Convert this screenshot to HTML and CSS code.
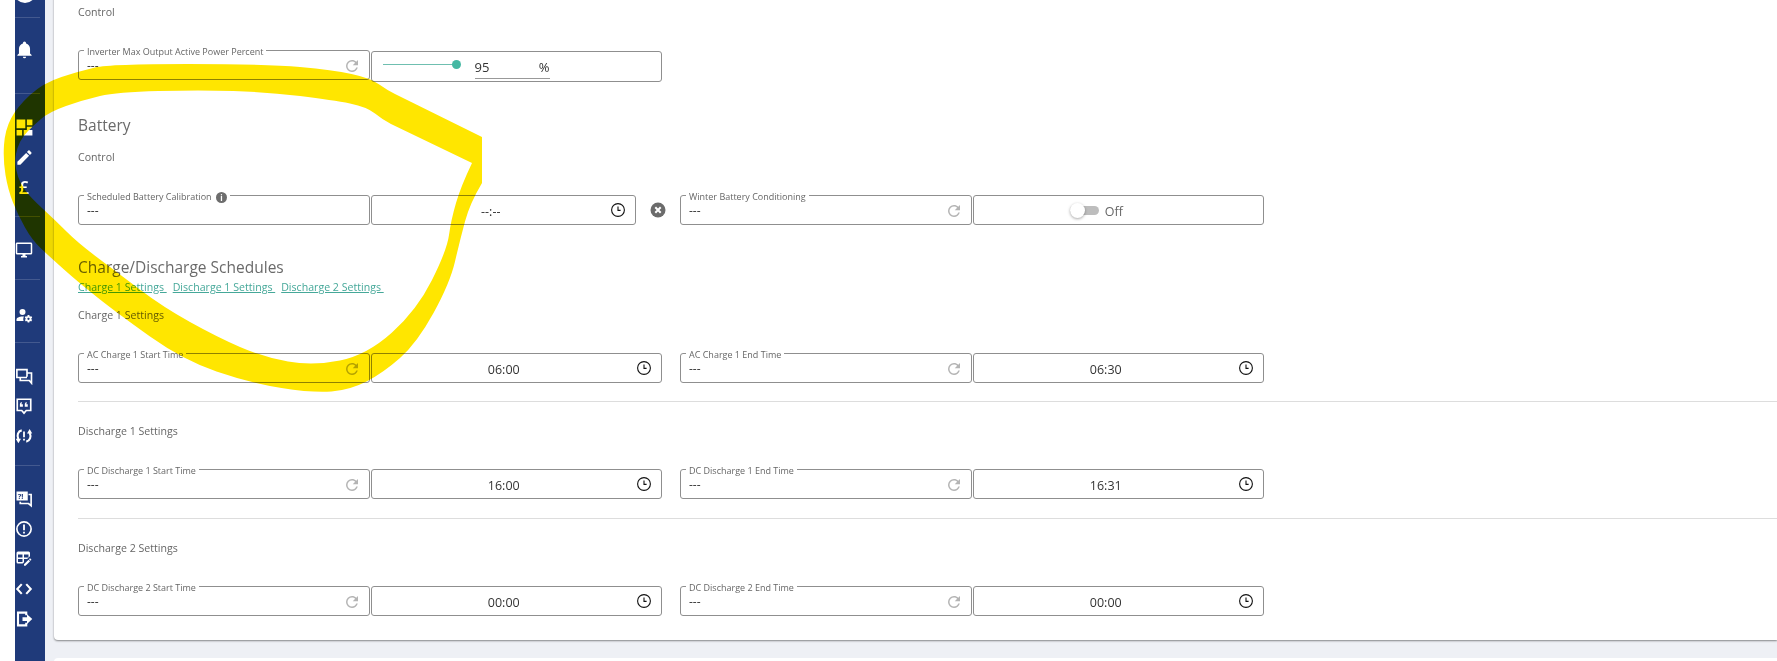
FILE: index.html
```html
<!DOCTYPE html>
<html lang="en">
<head>
    <meta charset="UTF-8">
    <title>Inverter Settings</title>
    <link rel="stylesheet" href="styles.css">
</head>
<body>
    <svg class="sprite" aria-hidden="true">
        <symbol id="i-refresh" viewBox="0 0 24 24"><path d="M17.65,6.35C16.2,4.9 14.21,4 12,4A8,8 0 0,0 4,12A8,8 0 0,0 12,20C15.73,20 18.84,17.45 19.73,14H17.65C16.83,16.33 14.61,18 12,18A6,6 0 0,1 6,12A6,6 0 0,1 12,6C13.66,6 15.14,6.69 16.22,7.78L13,11H20V4L17.65,6.35Z"/></symbol>
        <symbol id="i-clock" viewBox="0 0 16 16"><circle cx="8" cy="8" r="6.4" fill="none" stroke="currentColor" stroke-width="1.1"/><path d="M8 4.6V8.4H10.6" fill="none" stroke="currentColor" stroke-width="1.1"/></symbol>
    </svg>

    <div class="page">
        <!-- サイドバー -->
        <nav class="sidebar">
            <div class="logo"></div>
            <div class="nav-group nav-group-alerts">
                <div class="nav-item"><svg viewBox="0 0 24 24"><path d="M21,19V20H3V19L5,17V11C5,7.9 7.03,5.17 10,4.29C10,4.19 10,4.1 10,4A2,2 0 0,1 12,2A2,2 0 0,1 14,4C14,4.1 14,4.19 14,4.29C16.97,5.17 19,7.9 19,11V17L21,19M14,21A2,2 0 0,1 12,23A2,2 0 0,1 10,21"/></svg></div>
            </div>
            <div class="nav-group">
                <div class="nav-item"><svg viewBox="0 0 24 24"><path d="M2 2H13V13H2ZM15 2H22V9H15ZM2 15H9V22H2ZM11 15H22V22H11Z M15 11H22L15 18Z"/></svg></div>
                <div class="nav-item"><svg viewBox="0 0 24 24"><path d="M20.71,7.04C21.1,6.65 21.1,6 20.71,5.63L18.37,3.29C18,2.9 17.35,2.9 16.96,3.29L15.12,5.12L18.87,8.87M3,17.25V21H6.75L17.81,9.93L14.06,6.18L3,17.25Z"/></svg></div>
                <div class="nav-item nav-pound">£</div>
            </div>
            <div class="nav-group">
                <div class="nav-item"><svg class="icon-lg" viewBox="0 0 24 24"><path d="M21,16H3V4H21M21,2H3C1.89,2 1,2.89 1,4V16A2,2 0 0,0 3,18H10V20H8V22H16V20H14V18H21A2,2 0 0,0 23,16V4C23,2.89 22.1,2 21,2Z"/></svg></div>
            </div>
            <div class="nav-group nav-group-admin">
                <div class="nav-item"><svg class="icon-lg" viewBox="0 0 24 24"><path d="M10 4A4 4 0 0 0 6 8A4 4 0 0 0 10 12A4 4 0 0 0 14 8A4 4 0 0 0 10 4M10 14C5.58 14 2 15.79 2 18V20H11.5A6.5 6.5 0 0 1 11 17.5A6.5 6.5 0 0 1 11.95 14.14C11.32 14.06 10.68 14 10 14M17 12C16.87 12 16.76 12.09 16.74 12.21L16.55 13.53C16.25 13.66 15.96 13.82 15.7 14L14.46 13.5C14.35 13.5 14.22 13.5 14.15 13.63L13.15 15.36C13.09 15.47 13.11 15.6 13.21 15.68L14.27 16.5C14.25 16.67 14.24 16.83 14.24 17C14.24 17.17 14.25 17.33 14.27 17.5L13.21 18.32C13.12 18.4 13.09 18.53 13.15 18.64L14.15 20.37C14.21 20.5 14.34 20.5 14.46 20.5L15.7 20C15.96 20.18 16.24 20.35 16.55 20.47L16.74 21.79C16.76 21.91 16.86 22 17 22H19C19.11 22 19.22 21.91 19.24 21.79L19.43 20.47C19.73 20.34 20 20.18 20.27 20L21.5 20.5C21.63 20.5 21.76 20.5 21.83 20.37L22.83 18.64C22.89 18.53 22.86 18.4 22.77 18.32L21.7 17.5C21.72 17.33 21.74 17.17 21.74 17C21.74 16.83 21.73 16.67 21.7 16.5L22.76 15.68C22.85 15.6 22.88 15.47 22.82 15.36L21.82 13.63C21.76 13.5 21.63 13.5 21.5 13.5L20.27 14C20 13.82 19.73 13.65 19.42 13.53L19.23 12.21C19.22 12.09 19.11 12 19 12H17M18 15.5C18.83 15.5 19.5 16.17 19.5 17C19.5 17.83 18.83 18.5 18 18.5C17.16 18.5 16.5 17.83 16.5 17C16.5 16.17 17.17 15.5 18 15.5Z"/></svg></div>
            </div>
            <div class="nav-group">
                <div class="nav-item"><svg class="icon-lg" viewBox="0 0 24 24"><path class="line" d="M16 13V3.5H2.5V14H16M7 14V18H19L22 21.5V8H16"/></svg></div>
                <div class="nav-item"><svg class="icon-lg" viewBox="0 0 24 24"><path class="line" d="M3 3H21V18H15L12 21.5L9 18H3Z"/><path d="M6.5 13V10C6.5 8 7.5 7 9 6.5V8.5C8.7 8.7 8.5 9 8.5 9.5H10.5V13ZM13 13V10C13 8 14 7 15.5 6.5V8.5C15.2 8.7 15 9 15 9.5H17V13Z"/></svg></div>
                <div class="nav-item"><svg class="icon-lg" viewBox="0 0 24 24"><path class="line line-bold" d="M9 4.5C4 5.5 2 11 4.5 16.5M15 19.5C20 18.5 22 13 19.5 7.5"/><path d="M1 15.5L8 15.5L4.5 21.5ZM23 8.5L16 8.5L19.5 2.5ZM10.8 6H13.2V13.5H10.8ZM10.8 15.5H13.2V18H10.8Z"/></svg></div>
            </div>
            <div class="nav-group">
                <div class="nav-item"><svg class="icon-lg" viewBox="0 0 24 24"><path d="M2 2H17V14H2Z"/><path class="line" d="M18 6H21.5V21L18 18H7V15.5"/><text class="icon-text" x="3.6" y="11.5">?!</text></svg></div>
                <div class="nav-item"><svg class="icon-lg" viewBox="0 0 24 24"><circle class="line" cx="12" cy="12" r="9.5"/><path d="M10.8 6H13.2V13.5H10.8ZM10.8 15.5H13.2V18H10.8Z"/></svg></div>
                <div class="nav-item"><svg class="icon-lg" viewBox="0 0 24 24"><path d="M21.7,13.35L20.7,14.35L18.65,12.3L19.65,11.3C19.86,11.08 20.21,11.08 20.42,11.3L21.7,12.58C21.92,12.79 21.92,13.14 21.7,13.35M12,18.94L18.07,12.88L20.12,14.93L14.06,21H12V18.94M4,2H18A2,2 0 0,1 20,4V8.17L16.17,12H12V16.17L10.17,18H4A2,2 0 0,1 2,16V4A2,2 0 0,1 4,2M4,6V10H10V6H4M12,6V10H18V6H12M4,12V16H10V12H4Z"/></svg></div>
                <div class="nav-item"><svg class="icon-lg" viewBox="0 0 24 24"><path class="line line-bold" d="M9 5.5L3 12L9 18.5M15 5.5L21 12L15 18.5"/></svg></div>
                <div class="nav-item"><svg class="icon-lg" viewBox="0 0 24 24"><path class="line line-bold" d="M15 7V3.5H4V20.5H15V17"/><path d="M10 9.5H16V5.5L23 12L16 18.5V14.5H10Z"/></svg></div>
            </div>
        </nav>

        <main class="content">
            <div class="card">
                <section class="block">
                    <h4 class="subhead">Control</h4>
                    <div class="row">
                        <div class="pair">
                            <div class="field field-read">
                                <span class="field-label">Inverter Max Output Active Power Percent</span>
                                <span class="field-value">---</span>
                                <svg class="icon-refresh"><use href="#i-refresh"/></svg>
                            </div>
                            <div class="field field-slider">
                                <div class="slider"><span class="slider-thumb"></span></div>
                                <div class="percent-input"><span>95</span><span>%</span></div>
                            </div>
                        </div>
                    </div>
                </section>

                <section class="block">
                    <h3 class="heading">Battery</h3>
                    <h4 class="subhead subhead-tight">Control</h4>
                    <div class="row row-battery">
                        <div class="pair pair-short">
                            <div class="field field-read">
                                <span class="field-label">Scheduled Battery Calibration <span class="info-dot">i</span></span>
                                <span class="field-value">---</span>
                            </div>
                            <div class="field field-time">
                                <span class="time-value">--:--</span>
                                <svg class="icon-clock"><use href="#i-clock"/></svg>
                            </div>
                        </div>
                        <div class="clear-cell">
                            <svg class="icon-clear" viewBox="0 0 16 16"><circle cx="8" cy="8" r="7.5"/><path d="M5.3 5.3L10.7 10.7M10.7 5.3L5.3 10.7"/></svg>
                        </div>
                        <div class="pair">
                            <div class="field field-read">
                                <span class="field-label">Winter Battery Conditioning</span>
                                <span class="field-value">---</span>
                                <svg class="icon-refresh"><use href="#i-refresh"/></svg>
                            </div>
                            <div class="field field-toggle">
                                <span class="toggle"><span class="toggle-knob"></span></span>
                                <span class="toggle-text">Off</span>
                            </div>
                        </div>
                    </div>
                </section>

                <section class="block">
                    <h3 class="heading heading-schedules">Charge/Discharge Schedules</h3>
                    <div class="links">
                        <a href="#charge1">Charge 1 Settings&nbsp;</a>
                        <a href="#discharge1">Discharge 1 Settings&nbsp;</a>
                        <a href="#discharge2">Discharge 2 Settings&nbsp;</a>
                    </div>
                    <h4 class="subhead subhead-tight" id="charge1">Charge 1 Settings</h4>
                    <div class="row">
                        <div class="pair">
                            <div class="field field-read">
                                <span class="field-label">AC Charge 1 Start Time</span>
                                <span class="field-value">---</span>
                                <svg class="icon-refresh"><use href="#i-refresh"/></svg>
                            </div>
                            <div class="field field-time">
                                <span class="time-value">06:00</span>
                                <svg class="icon-clock"><use href="#i-clock"/></svg>
                            </div>
                        </div>
                        <div class="pair">
                            <div class="field field-read">
                                <span class="field-label">AC Charge 1 End Time</span>
                                <span class="field-value">---</span>
                                <svg class="icon-refresh"><use href="#i-refresh"/></svg>
                            </div>
                            <div class="field field-time">
                                <span class="time-value">06:30</span>
                                <svg class="icon-clock"><use href="#i-clock"/></svg>
                            </div>
                        </div>
                    </div>
                </section>

                <section class="block block-divided">
                    <h4 class="subhead" id="discharge1">Discharge 1 Settings</h4>
                    <div class="row">
                        <div class="pair">
                            <div class="field field-read">
                                <span class="field-label">DC Discharge 1 Start Time</span>
                                <span class="field-value">---</span>
                                <svg class="icon-refresh"><use href="#i-refresh"/></svg>
                            </div>
                            <div class="field field-time">
                                <span class="time-value">16:00</span>
                                <svg class="icon-clock"><use href="#i-clock"/></svg>
                            </div>
                        </div>
                        <div class="pair">
                            <div class="field field-read">
                                <span class="field-label">DC Discharge 1 End Time</span>
                                <span class="field-value">---</span>
                                <svg class="icon-refresh"><use href="#i-refresh"/></svg>
                            </div>
                            <div class="field field-time">
                                <span class="time-value">16:31</span>
                                <svg class="icon-clock"><use href="#i-clock"/></svg>
                            </div>
                        </div>
                    </div>
                </section>

                <section class="block block-divided block-last">
                    <h4 class="subhead" id="discharge2">Discharge 2 Settings</h4>
                    <div class="row">
                        <div class="pair">
                            <div class="field field-read">
                                <span class="field-label">DC Discharge 2 Start Time</span>
                                <span class="field-value">---</span>
                                <svg class="icon-refresh"><use href="#i-refresh"/></svg>
                            </div>
                            <div class="field field-time">
                                <span class="time-value">00:00</span>
                                <svg class="icon-clock"><use href="#i-clock"/></svg>
                            </div>
                        </div>
                        <div class="pair">
                            <div class="field field-read">
                                <span class="field-label">DC Discharge 2 End Time</span>
                                <span class="field-value">---</span>
                                <svg class="icon-refresh"><use href="#i-refresh"/></svg>
                            </div>
                            <div class="field field-time">
                                <span class="time-value">00:00</span>
                                <svg class="icon-clock"><use href="#i-clock"/></svg>
                            </div>
                        </div>
                    </div>
                </section>
            </div>
            <div class="card card-next"></div>
        </main>

        <!-- 黄色のマーカー -->
        <svg class="marker" viewBox="0 0 1777 661" aria-hidden="true">
            <path fill-rule="evenodd" d="M482 137L395 94Q387 90 378.5 84Q370 78 351.5 74Q333 70 300 67Q267 64 188 64Q110 64 95 67.5Q80 71 61.5 77Q43 83 30 95Q17 107 11 118.5Q5 130 4 145Q3 160 5.5 175Q8 190 13 202.5Q18 215 25 227.5Q32 240 41 248.5Q50 257 64 269.5Q78 282 97.5 297.5Q117 313 150 336.5Q183 360 216.5 371.5Q250 383 281.5 388Q313 393 331.5 391.5Q350 390 366.5 381.5Q383 373 400 358Q417 343 433.5 313Q450 283 455 261.5Q460 240 465 221.5Q470 203 482 183Z M472 163L391 124Q383 120 375 113.5Q367 107 350 103.5Q333 100 300 96Q267 92 233.5 91Q200 90 158.5 91Q117 92 100 96Q83 100 66 106Q49 112 41 119Q33 126 28 131Q23 136 20 142Q17 148 16 154Q15 160 15.5 165Q16 170 18 176.5Q20 183 25 190Q30 197 42.5 208.5Q55 220 66.5 231.5Q78 243 98 258Q118 273 140.5 290Q163 307 190 322Q217 337 240 347Q263 357 288 361.5Q313 366 340 360.5Q367 355 392 332.5Q417 310 432 280Q447 250 449 235Q451 220 456 203Q461 186 472 163Z"/>
        </svg>
    </div>
</body>
</html>
```

FILE: styles.css
```css
/* 全体 */
* {
    box-sizing: border-box;
}

body {
    margin: 0;
    background-color: #fff;
    color: #666;
    font-family: 'Open Sans', 'Liberation Sans', sans-serif;
    font-size: 12px;
}

.sprite {
    display: none;
}

.page {
    position: relative;
    display: flex;
    height: 661px;
    overflow: hidden;
}

/* サイドバー */
.sidebar {
    flex: none;
    width: 30px;
    margin-left: 15px;
    padding-top: 18px;
    background-color: #1f3a7a;
    color: #fff;
}

.logo {
    position: absolute;
    top: -19px;
    left: 14px;
    width: 22px;
    height: 22px;
    border-radius: 50%;
    background-color: #fff;
}

.nav-group {
    padding: 18px 0 15px;
    border-top: 1px solid rgba(255,255,255,0.16);
    margin-right: 5px;
    margin-top: -1px;
}

.nav-group-alerts {
    padding: 16px 0 30px;
}

.nav-group-admin {
    padding: 20px 0 13px;
}

.nav-item {
    display: flex;
    align-items: center;
    justify-content: center;
    height: 30px;
    margin-right: 7px;
}

.nav-item svg {
    width: 19px;
    height: 19px;
    flex: none;
    fill: currentColor;
}

.nav-item svg.icon-lg {
    width: 18px;
    height: 18px;
}

.nav-pound {
    font-size: 18px;
    font-weight: 600;
    line-height: 1;
}

.line {
    fill: none;
    stroke: currentColor;
    stroke-width: 2.2;
}

.line-bold {
    stroke-width: 2.8;
}

.icon-text {
    fill: #1f3a7a;
    font-family: 'Open Sans', sans-serif;
    font-size: 10px;
    font-weight: 700;
}

/* カード */
.content {
    flex: 1;
    min-width: 0;
    padding-left: 9px;
    background-color: #eef0f5;
}

.card {
    margin-top: -20px;
    padding: 23px 0 24px 24px;
    border-radius: 4px 0 0 4px;
    background-color: #fff;
    box-shadow: 0 1px 2px rgba(0,0,0,0.45);
}

.card-next {
    height: 60px;
    margin-top: 18px;
    padding: 0;
    box-shadow: none;
}

/* 見出し */
.heading {
    margin: 31px 0 0;
    padding-top: 1px;
    color: #6a6a6a;
    font-size: 15.5px;
    font-weight: 400;
    line-height: 23px;
}

.heading-schedules {
    margin-top: 30px;
    padding-top: 0;
    line-height: 24px;
}

.subhead {
    margin: 0;
    padding-top: 1px;
    color: #666;
    font-size: 10.6px;
    font-weight: 400;
    line-height: 17px;
}

.subhead-tight {
    margin-top: 11px;
}

.links {
    display: flex;
    gap: 6px;
    padding-top: 1px;
    line-height: 15px;
    margin-bottom: 1px;
}

.links a {
    color: #45a899;
    font-size: 10.6px;
}

.block-divided {
    margin-top: 18px;
    padding-top: 20px;
    border-top: 1px solid #ddd;
}

.block-last {
    margin-top: 19px;
}

/* 入力欄 */
.row {
    display: flex;
    gap: 18px;
    margin-top: 29px;
}

.row-battery {
    gap: 0;
}

.pair {
    display: flex;
    gap: 1px;
    width: 584px;
}

.pair-short {
    width: 558px;
}

.field {
    position: relative;
    display: flex;
    align-items: center;
    height: 30px;
    border: 1px solid #8f8f8f;
    border-radius: 3px;
}

.field-read {
    flex: none;
    width: 291.5px;
    padding: 2px 8px 0 8px;
    justify-content: space-between;
}

.field-label {
    position: absolute;
    top: -5px;
    left: 5px;
    padding: 0 3px;
    background-color: #fff;
    color: #666;
    font-size: 9px;
    line-height: 12px;
    white-space: nowrap;
}

.field-value {
    color: #333;
    font-size: 12px;
    line-height: 16px;
}

.icon-refresh {
    width: 18px;
    height: 18px;
    fill: #b4b4b4;
}

.info-dot {
    display: inline-block;
    width: 11px;
    height: 11px;
    margin-left: 2px;
    border-radius: 50%;
    background-color: #6d6d6d;
    color: #fff;
    font-size: 8px;
    font-weight: 700;
    line-height: 11px;
    text-align: center;
    vertical-align: -1px;
}

.field-time {
    flex: 1;
    padding: 0 9px 0 0;
}

.time-value {
    flex: 1;
    padding-top: 2px;
    color: #333;
    font-size: 12.5px;
    text-align: center;
}

.icon-clock {
    flex: none;
    width: 16px;
    height: 16px;
    color: #111;
}

.clear-cell {
    display: flex;
    flex: none;
    align-items: center;
    justify-content: center;
    width: 44px;
    height: 30px;
}

.icon-clear {
    width: 16px;
    height: 16px;
}

.icon-clear circle {
    fill: #6b6b6b;
}

.icon-clear path {
    fill: none;
    stroke: #fff;
    stroke-width: 2;
}

/* スライダー */
.field-slider {
    flex: 1;
    height: 31px;
    margin-top: 1px;
    padding-left: 11px;
}

.slider {
    position: relative;
    width: 74px;
    height: 1px;
    margin-top: -5px;
    background-color: #6fbfb0;
}

.slider-thumb {
    position: absolute;
    top: -4px;
    right: -4px;
    width: 9px;
    height: 9px;
    border-radius: 50%;
    background-color: #45b8a3;
}

.percent-input {
    display: flex;
    justify-content: space-between;
    width: 75px;
    margin: 0 0 0 18px;
    padding: 4px 0 2px;
    border-bottom: 1px solid #999;
    color: #333;
    font-size: 13px;
    line-height: 18px;
}

/* トグル */
.field-toggle {
    flex: 1;
    justify-content: center;
    padding-right: 44px;
}

.toggle {
    position: relative;
    width: 29px;
    height: 9px;
    border-radius: 5px;
    background-color: #bdbdbd;
}

.toggle-knob {
    position: absolute;
    top: -3px;
    left: 0;
    width: 15px;
    height: 15px;
    border-radius: 50%;
    background-color: #fff;
    box-shadow: 0 1px 3px rgba(0,0,0,0.35);
}

.toggle-text {
    margin-left: 6px;
    padding-top: 2px;
    color: #666;
    font-size: 12.5px;
}

/* 黄色のマーカー */
.marker {
    position: absolute;
    top: 0;
    left: 0;
    width: 1777px;
    height: 661px;
    fill: #ffe600;
    mix-blend-mode: multiply;
    pointer-events: none;
}
```
